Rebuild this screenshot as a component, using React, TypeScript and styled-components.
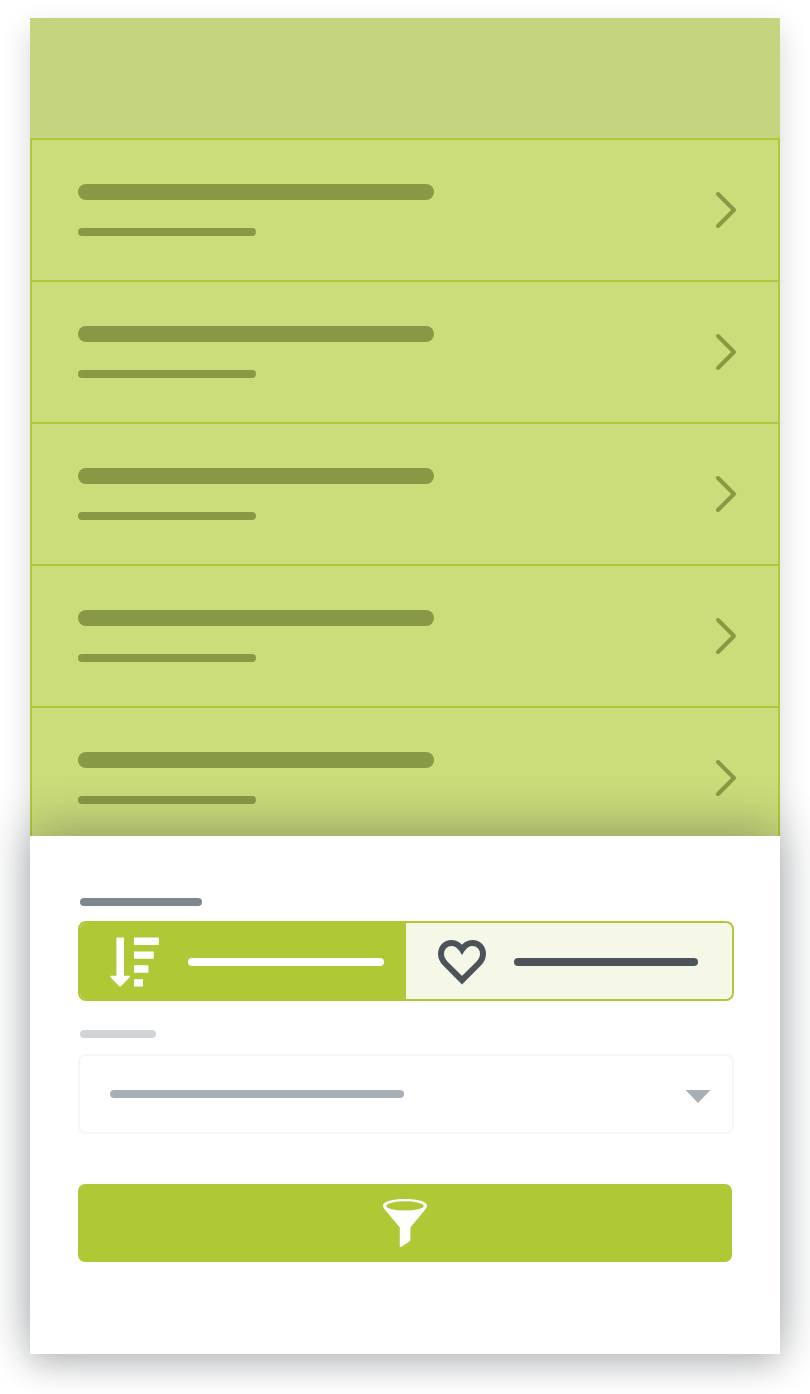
import React from 'react';
import styled, { createGlobalStyle } from 'styled-components';

const GlobalStyle = createGlobalStyle`
  *, *::before, *::after { box-sizing: border-box; }
  body { margin: 0; background: #fff; font-family: "Liberation Sans", sans-serif; overflow: hidden; }
`;

const Page = styled.main`
  width: 810px;
  height: 1394px;
  padding: 18px 30px 40px;
  background: #fff;
  overflow: hidden;
`;

const Phone = styled.div`
  display: flex;
  flex-direction: column;
  height: 1336px;
  box-shadow: 0 12px 28px rgba(10, 16, 22, 0.17);
`;

const Header = styled.header`
  flex: none;
  height: 120px;
  background: #c5d47e;
`;

const List = styled.ul`
  flex: none;
  height: 698px;
  margin: 0;
  padding: 0;
  list-style: none;
  overflow: hidden;
`;

const Row = styled.li`
  display: flex;
  justify-content: space-between;
  height: 142px;
  padding: 44px 41px 0 46px;
  border: 2px solid #afc936;
  border-bottom: 0;
  background: #cbdc7b;
`;

const RowText = styled.div`
  display: flex;
  flex-direction: column;
  gap: 28px;
`;

const Bar = styled.div<{ $width: number; $color: string; $height?: number }>`
  flex: none;
  width: ${p => p.$width}px;
  height: ${p => p.$height ?? 8}px;
  border-radius: ${p => (p.$height ? 8 : 4)}px;
  background: ${p => p.$color};
`;

const Chevron = styled.svg`
  width: 22px;
  height: 38px;
  margin-top: 7px;
`;

const Sheet = styled.section`
  position: relative;
  flex: 1;
  display: flex;
  flex-direction: column;
  padding: 62px 46px 0 48px;
  background: #fff;
  box-shadow: 0 -8px 46px rgba(20, 28, 34, 0.31);
`;

const Label = styled.div`
  padding-left: 2px;
`;

const Segmented = styled.div`
  display: flex;
  height: 80px;
  margin: 15px 0 29px;
  border: 2px solid #afc936;
  border-radius: 8px;
  background: #f5f8e7;
  overflow: hidden;
`;

const Segment = styled.div<{ $active?: boolean }>`
  display: flex;
  align-items: center;
  width: 326px;
  gap: ${p => (p.$active ? 29 : 28)}px;
  padding: 2px 0 0 ${p => (p.$active ? 30 : 32)}px;
  background: ${p => (p.$active ? '#afc936' : 'transparent')};
`;

const Icon = styled.svg`
  display: block;
  flex: none;
`;

const Select = styled.div`
  display: flex;
  align-items: center;
  justify-content: space-between;
  height: 80px;
  margin: 16px 0 50px;
  padding: 0 21px 0 30px;
  border: 2px solid #f6f6f7;
  border-radius: 8px;
`;

const Caret = styled.svg`
  width: 26px;
  height: 13px;
  margin-top: 5px;
`;

const FilterButton = styled.button`
  display: flex;
  align-items: center;
  justify-content: center;
  width: 654px;
  height: 78px;
  padding: 0;
  border: 0;
  border-radius: 7px;
  background: #afc936;
`;

const ListRow = () => (
  <Row>
    <RowText>
      <Bar $width={356} $height={16} $color="#889945" />
      <Bar $width={178} $color="#889945" />
    </RowText>
    <Chevron viewBox="0 0 22 38">
      <path d="M3 3L19 19L3 35" fill="none" stroke="#889945" strokeWidth="4" strokeLinecap="round" strokeLinejoin="round" />
    </Chevron>
  </Row>
);

const SortIcon = () => (
  <Icon width="49" height="50" viewBox="0 0 49 50" fill="#fff">
    <path d="M6.4 1.200q0-.7.7-.7h6.200q.7 0 .7.7v37.500h5.200q1.400.4.500 1.500L11 49.200q-.9.7-1.800 0L.5 40.200q-.8-1.300.6-1.500h5.300z" />
    <path d="M24 .5h24.800v7.400H24zM24 14.400h19.700v7.400H24zM24 28.300h14.400v7.400H24zM24 42.200h9v7.300h-9z" />
  </Icon>
);

const HeartIcon = () => (
  <Icon width="48" height="45" viewBox="0 0 48 45">
    <path
      d="M24 9.500C21.300 5.300 17.600 3 13.500 3C7.500 3 3 7.600 3 13.800C3 17.800 4.400 20.600 7.300 23.500L24 40.200L40.700 23.500C43.600 20.600 45 17.800 45 13.800C45 7.600 40.500 3 34.500 3C30.400 3 26.700 5.300 24 9.500Z"
      fill="none"
      stroke="#4c5359"
      strokeWidth="6"
    />
  </Icon>
);

const FunnelIcon = () => (
  <Icon width="44" height="50" viewBox="0 0 44 50">
    <path
      d="M0 7.500C0 3.600 9.500 1 22 1S44 3.600 44 7.500C44 9.300 42.600 11 41.200 12.700L27.400 29.600V41.500Q27.400 42.800 26.300 43.500L18.500 48.700Q16.800 49.500 16.800 48V29.600L2.800 12.700C1.400 11 0 9.300 0 7.500Z"
      fill="#fff"
    />
    <ellipse cx="22" cy="7.900" rx="18.700" ry="4.600" fill="#afc936" />
  </Icon>
);

export default function App() {
  return (
    <Page>
      <GlobalStyle />
      <Phone>
        <Header />
        <List>
          {[0, 1, 2, 3, 4].map(i => (
            <ListRow key={i} />
          ))}
        </List>
        <Sheet>
          <Label>
            <Bar $width={122} $color="#7c888e" />
          </Label>
          <Segmented>
            <Segment $active>
              <SortIcon />
              <Bar $width={196} $color="#fff" />
            </Segment>
            <Segment>
              <HeartIcon />
              <Bar $width={184} $color="#4c5359" />
            </Segment>
          </Segmented>
          <Label>
            <Bar $width={76} $color="#d1d5d8" />
          </Label>
          <Select>
            <Bar $width={294} $color="#a8b0b7" />
            <Caret viewBox="0 0 26 13">
              <path d="M.5 0h25L13 13z" fill="#a8b0b7" />
            </Caret>
          </Select>
          <FilterButton aria-label="Filter">
            <FunnelIcon />
          </FilterButton>
        </Sheet>
      </Phone>
    </Page>
  );
}
